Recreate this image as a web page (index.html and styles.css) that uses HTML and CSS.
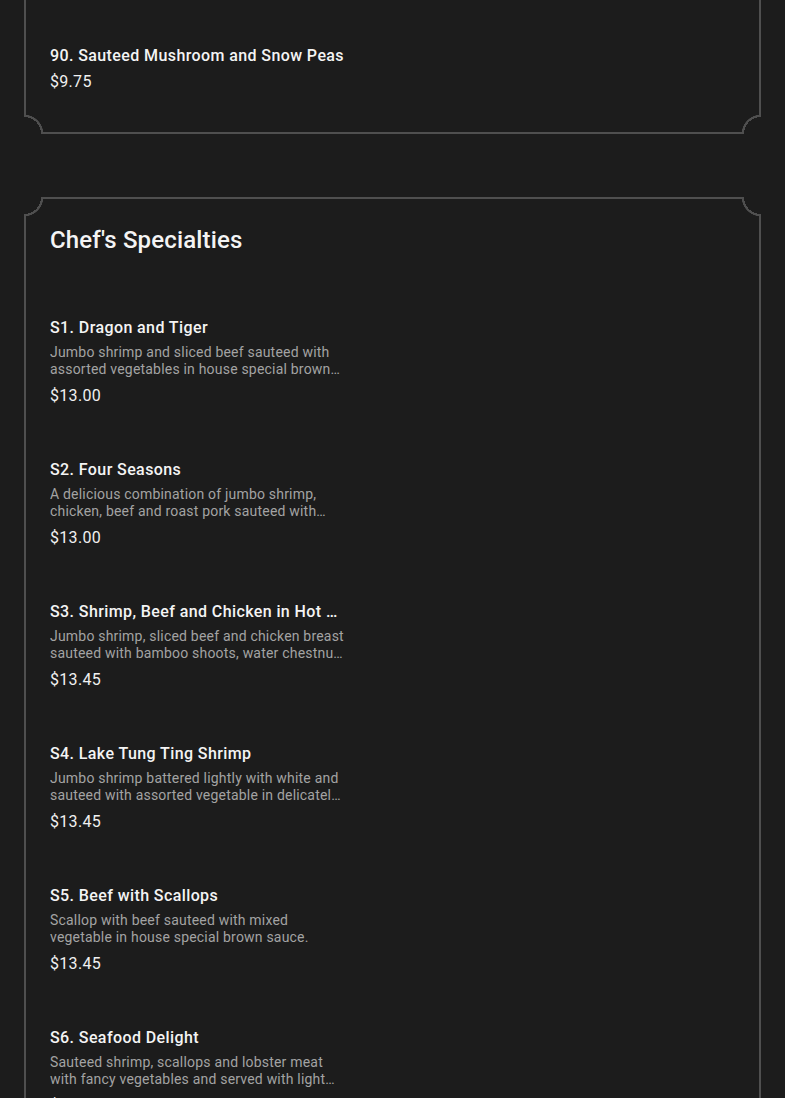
FILE: index.html
```html
<!DOCTYPE html>
<html lang="en">
<head>
<meta charset="utf-8">
<title>Menu</title>
<link rel="stylesheet" href="styles.css">
</head>
<body>
<main class="menu">
  <section class="card card-continued">
    <ul class="items">
      <li class="item">
        <h3 class="item-title">90. Sauteed Mushroom and Snow Peas</h3>
        <p class="item-price">$9.75</p>
      </li>
    </ul>
  </section>

  <section class="card">
    <h2 class="card-title">Chef's Specialties</h2>
    <ul class="items">
      <li class="item">
        <h3 class="item-title">S1. Dragon and Tiger</h3>
        <p class="item-desc">Jumbo shrimp and sliced beef sauteed with assorted vegetables in house special brown sauce.</p>
        <p class="item-price">$13.00</p>
      </li>
      <li class="item">
        <h3 class="item-title">S2. Four Seasons</h3>
        <p class="item-desc">A delicious combination of jumbo shrimp, chicken, beef and roast pork sauteed with assorted vegetables.</p>
        <p class="item-price">$13.00</p>
      </li>
      <li class="item">
        <h3 class="item-title">S3. Shrimp, Beef and Chicken in Hot Garlic Sauce</h3>
        <p class="item-desc">Jumbo shrimp, sliced beef and chicken breast sauteed with bamboo shoots, water chestnuts and vegetables.</p>
        <p class="item-price">$13.45</p>
      </li>
      <li class="item">
        <h3 class="item-title">S4. Lake Tung Ting Shrimp</h3>
        <p class="item-desc">Jumbo shrimp battered lightly with white and sauteed with assorted vegetable in delicatel white sauce.</p>
        <p class="item-price">$13.45</p>
      </li>
      <li class="item">
        <h3 class="item-title">S5. Beef with Scallops</h3>
        <p class="item-desc">Scallop with beef sauteed with mixed vegetable in house special brown sauce.</p>
        <p class="item-price">$13.45</p>
      </li>
      <li class="item">
        <h3 class="item-title">S6. Seafood Delight</h3>
        <p class="item-desc">Sauteed shrimp, scallops and lobster meat with fancy vegetables and served with light white sauce.</p>
        <p class="item-price">$14.45</p>
      </li>
    </ul>
  </section>
</main>
</body>
</html>
```

FILE: styles.css
```css
* { box-sizing: border-box; }

html, body {
  margin: 0;
  padding: 0;
  background: #1c1c1c;
}

body {
  font-family: Roboto, "Liberation Sans", Arial, sans-serif;
  color: #f2f2f2;
}

.menu {
  display: flex;
  flex-direction: column;
  gap: 63px;
  padding: 0 24px;
}

.card {
  position: relative;
  border: 2px solid #4f4f4f;
  padding: 24px;
  background: #1c1c1c;
}

.card::before {
  content: "";
  position: absolute;
  inset: -2px;
  pointer-events: none;
  background:
    radial-gradient(circle at 0 0, #1c1c1c 17px, #4f4f4f 17px, #4f4f4f 19px, transparent 19.5px) top left / 22px 22px no-repeat,
    radial-gradient(circle at 100% 0, #1c1c1c 17px, #4f4f4f 17px, #4f4f4f 19px, transparent 19.5px) top right / 22px 22px no-repeat,
    radial-gradient(circle at 0 100%, #1c1c1c 17px, #4f4f4f 17px, #4f4f4f 19px, transparent 19.5px) bottom left / 22px 22px no-repeat,
    radial-gradient(circle at 100% 100%, #1c1c1c 17px, #4f4f4f 17px, #4f4f4f 19px, transparent 19.5px) bottom right / 22px 22px no-repeat;
}

.card-continued {
  margin-top: -60px;
  padding-top: 88px;
}

.card-title {
  margin: 3px 0 48px;
  font-size: 24px;
  line-height: 28px;
  font-weight: 500;
  letter-spacing: 0.15px;
  color: #f4f4f4;
}

.items {
  list-style: none;
  margin: 0;
  padding: 0;
  display: flex;
  flex-direction: column;
  gap: 22px;
}

.item {
  width: 296px;
  padding: 16px 0;
  display: flex;
  flex-direction: column;
  gap: 6px;
}

.item-title {
  margin: 0;
  font-size: 16px;
  line-height: 20px;
  font-weight: 500;
  color: #f4f4f4;
  white-space: nowrap;
  overflow: hidden;
  text-overflow: ellipsis;
  letter-spacing: 0.4px;
}

.item-desc {
  margin: 0 0 2px;
  font-size: 14px;
  line-height: 17px;
  color: #a3a3a3;
  letter-spacing: 0.2px;
  display: -webkit-box;
  -webkit-line-clamp: 2;
  -webkit-box-orient: vertical;
  overflow: hidden;
}

.item-price {
  margin: 0;
  font-size: 16px;
  line-height: 20px;
  letter-spacing: 0.3px;
  color: #f0f0f0;
}
```
